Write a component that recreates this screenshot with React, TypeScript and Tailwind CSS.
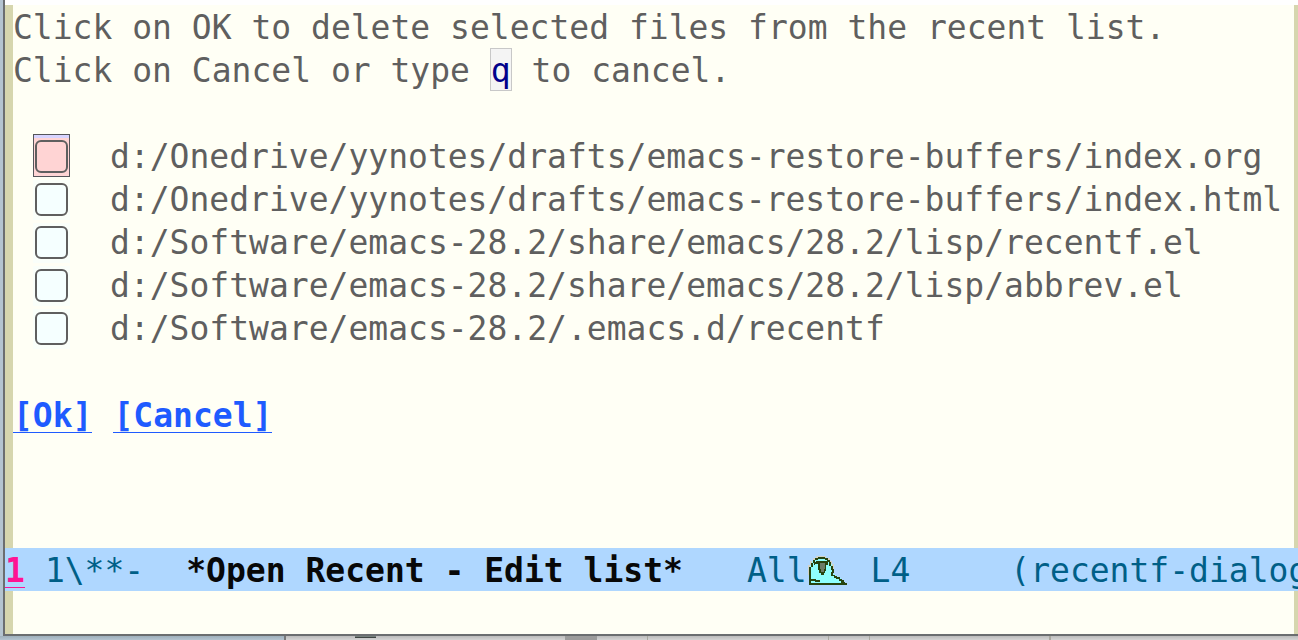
const files = [
  "d:/Onedrive/yynotes/drafts/emacs-restore-buffers/index.org",
  "d:/Onedrive/yynotes/drafts/emacs-restore-buffers/index.html",
  "d:/Software/emacs-28.2/share/emacs/28.2/lisp/recentf.el",
  "d:/Software/emacs-28.2/share/emacs/28.2/lisp/abbrev.el",
  "d:/Software/emacs-28.2/.emacs.d/recentf",
];

function Parrot() {
  return (
    <svg viewBox="0 0 40 33" className="h-[33px] w-10 shrink-0" aria-hidden="true">
      <g shapeRendering="crispEdges">
        <path d="M1 21V11H3V7H6V4H9V2H19V4H23V7H25V10H27V18H24V12H5V21Z" fill="#d3d3c8" />
        <path d="M3 30V11H5V7H8V4H19V6H22V10H25V20H28V22H31V24H34V27H37V30Z" fill="#8ffffd" />
        <path
          d="M2 13H4V29H34V28H36V29H40V31H2ZM4 9H6V13H4ZM6 6H8V9H6ZM8 4H11V6H8ZM11 3H18V5H11ZM18 4H21V6H18ZM20 6H23V8H20ZM22 8H24V12H22ZM24 12H26V16H24ZM25 15H27V19H25ZM24 18H26V21H28V22H30V24H27V22H24ZM29 23H33V25H29ZM32 25H35V27H32ZM34 26H37V28H34ZM36 28H38V30H36Z"
          fill="#27440f"
        />
        <path d="M7 8H9V7H21V11H19V17H18V19H17V21H14V19H12V16H11V10H8V11H7Z" fill="#27440f" />
        <path d="M13 9H18V15H17V18H14V15H13Z" fill="#6c7c68" />
        <path d="M4 25H9V26H13V28H8V27H4Z" fill="#27440f" />
      </g>
    </svg>
  );
}

function FileRow({ path, active }: { path: string; active: boolean }) {
  return (
    <label className="flex h-[43px] items-center">
      <span
        className={
          active
            ? "flex h-[43px] w-[37px] shrink-0 items-end justify-center border border-[#55555a] bg-[linear-gradient(#d8d4ff_3px,#ffd4d4_3px)] pb-[3px]"
            : "flex h-[43px] w-[37px] shrink-0 items-end justify-center bg-[linear-gradient(transparent_3px,#fafffa_3px)] pb-1"
        }
      >
        <input
          type="checkbox"
          className={
            active
              ? "size-[33px] appearance-none rounded-md border-2 border-[#5f5f5f] bg-[#ffd4d4] checked:bg-[#5f5f5f]"
              : "size-[33px] appearance-none rounded-md border-2 border-[#5f5f5f] bg-[#f5ffff] checked:bg-[#5f5f5f]"
          }
        />
      </span>
      <span className="ml-10 pt-0.5">{path}</span>
    </label>
  );
}

export default function App() {
  return (
    <div className="flex min-h-screen flex-col overflow-hidden bg-[#d0d0d0] font-['DejaVu_Sans_Mono',monospace] text-[33px] leading-[41px] whitespace-pre text-[#5f5f5f]">
      <div className="flex flex-1">
        <div className="w-[3px] shrink-0 bg-[#b4c4d0]" />
        <div className="flex min-w-0 flex-1 flex-col border-b-2 border-l-2 border-[#6b6e70] bg-[#fffff5]">
          <div className="h-[5px] bg-white" />
          <main className="flex-1 overflow-hidden border-r-4 border-l-8 border-[#d6d6ae]">
            <p className="h-[43px] pt-0.5">Click on OK to delete selected files from the recent list.</p>
            <p className="flex h-[43px]">
              <span className="pt-0.5">Click on Cancel or type </span>
              <kbd className="border border-[#c8c8c8] bg-[#f4f4f4] pt-px font-['DejaVu_Sans_Mono',monospace] text-[#00008b]">q</kbd>
              <span className="pt-0.5"> to cancel.</span>
            </p>
            <div className="mt-[43px] pl-5">
              {files.map((path, i) => (
                <FileRow key={path} path={path} active={i === 0} />
              ))}
            </div>
            <div className="mt-11 flex gap-[21px] font-bold text-[#1f5bff]">
              <button type="button" className="h-10 border-b border-[#1f5bff] pt-0.5">[Ok]</button>
              <button type="button" className="h-10 border-b border-[#1f5bff] pt-0.5">[Cancel]</button>
            </div>
          </main>
          <footer className="flex h-[43px] overflow-hidden bg-[#afd7ff] pt-0.5 text-[#005f87]">
            <span className="h-[38px] border-b border-[#ff1493] font-bold text-[#ff1493]">1</span>
            <span className="ml-5">1\**-</span>
            <span className="ml-[42px] font-bold text-[#080808]">*Open Recent - Edit list*</span>
            <span className="ml-16">All</span>
            <span className="pt-1"><Parrot /></span>
            <span className="ml-6">L4</span>
            <span className="ml-[100px]">(recentf-dialog</span>
          </footer>
          <div className="flex h-[43px] border-r-4 border-l-8 border-[#d6d6ae]" />
        </div>
      </div>
      <div className="flex h-1 bg-linear-to-b from-[#bcbcbc] to-[#d4d4d4]">
        <div className="w-[286px] shrink-0 border-r-2 border-[#77797b] bg-linear-to-b from-[#9fb0bc] to-[#b4c4d0]" />
        <div className="ml-[69px] h-0.5 w-[21px] shrink-0 border-b border-[#404644] bg-[#75807c]" />
        <div className="ml-[189px] w-8 shrink-0 bg-[#9c9c9c]" />
        <div className="ml-[50px] w-[182px] shrink-0 border-x border-[#a8a8a0]" />
        <div className="ml-10 w-[182px] shrink-0 border-r-2 border-l border-[#a8a8a0]" />
      </div>
    </div>
  );
}
